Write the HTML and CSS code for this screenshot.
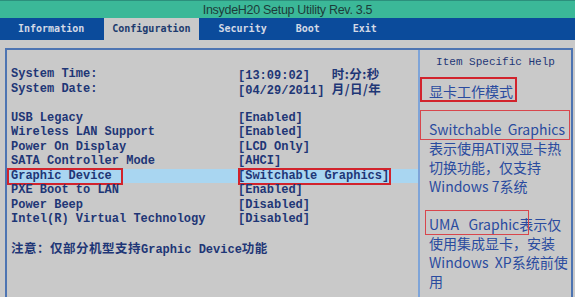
FILE: index.html
```html
<!DOCTYPE html>
<html lang="zh-CN">
<head>
  <meta charset="UTF-8" />
  <title>InsydeH20 Setup Utility</title>
  <link rel="stylesheet" href="styles.css">
</head>
<body>
  <div class="title">InsydeH20 Setup Utility Rev. 3.5</div>

  <nav class="tabs">
    <span class="tab">Information</span>
    <span class="tab active">Configuration</span>
    <span class="tab">Security</span>
    <span class="tab">Boot</span>
    <span class="tab">Exit</span>
  </nav>

  <main class="page">
    <div class="frame">
      <section class="settings">
        <div class="row"><span>System Time:</span><span>[13:09:02]&nbsp;&nbsp; <b class="cn">时:分:秒</b></span></div>
        <div class="row"><span>System Date:</span><span>[04/29/2011] <b class="cn">月/日/年</b></span></div>
        <div class="row gap"></div>
        <div class="row"><span>USB Legacy</span><span>[Enabled]</span></div>
        <div class="row"><span>Wireless LAN Support</span><span>[Enabled]</span></div>
        <div class="row"><span>Power On Display</span><span>[LCD Only]</span></div>
        <div class="row"><span>SATA Controller Mode</span><span>[AHCI]</span></div>
        <div class="row selected">
          <span>Graphic Device</span><span>[Switchable Graphics]</span>
          <i class="mark mark-label"></i>
          <i class="mark mark-value"></i>
        </div>
        <div class="row"><span>PXE Boot to LAN</span><span>[Enabled]</span></div>
        <div class="row"><span>Power Beep</span><span>[Disabled]</span></div>
        <div class="row"><span>Intel(R) Virtual Technology</span><span>[Disabled]</span></div>
        <div class="row gap"></div>
        <div class="note"><b class="cn">注意：仅部分机型支持</b>Graphic Device<b class="cn">功能</b></div>
      </section>

      <aside class="help">
        <div class="help-title">Item Specific Help</div>
        <div class="help-text">
          <div>显卡工作模式</div>
          <div>&nbsp;</div>
          <div class="pre">Switchable  Graphics</div>
          <div>表示使用ATI双显卡热</div>
          <div>切换功能，仅支持</div>
          <div>Windows 7系统</div>
          <div>&nbsp;</div>
          <div class="pre">UMA   Graphic表示仅</div>
          <div>使用集成显卡，安装</div>
          <div class="pre">Windows  XP系统前使</div>
          <div>用</div>
        </div>
        <i class="mark help-mark-1"></i>
        <i class="mark thin help-mark-2"></i>
        <i class="mark thin help-mark-3"></i>
      </aside>
    </div>
  </main>
</body>
</html>
```

FILE: styles.css
```css
body { margin: 0; width: 575px; height: 297px; overflow: hidden; background: #c9c9c9; font-family: "Liberation Mono", "Noto Sans CJK SC", monospace; }

.title { height: 18px; line-height: 19px; background: #3bb898; border-top: 1px solid #2c8f7c; box-sizing: border-box; text-align: center; color: #1d3c3a; font-family: "Liberation Sans", Arial, sans-serif; font-size: 12.5px; letter-spacing: -0.3px; }

.tabs { height: 22px; background: #0b4b9b; display: flex; align-items: stretch; gap: 12px; padding-left: 10px; }
.tab { padding: 0 8px; line-height: 22px; font-family: "DejaVu Sans Mono", monospace; font-weight: bold; font-size: 10px; color: #d3d9e6; }
.tab.active { background: #c9c9c9; color: #1c3a6e; }
.tab:nth-child(4) { margin-left: 1px; }
.tab:nth-child(5) { margin-left: 5px; }

.page { padding: 8px 2px 0 5px; }
.frame { display: flex; height: 260px; border: 2px solid #4d74b2; border-bottom: none; }

.settings { position: relative; width: 411px; border-right: 2px solid #7ea4d8; padding-top: 17px; color: #1e3676; font-size: 12px; font-weight: bold; }
.row { position: relative; display: grid; grid-template-columns: 227px 1fr; height: 14.5px; line-height: 14.5px; padding-left: 4px; }
.row.selected { background: #a9d6f1; }
.note { padding-left: 4px; line-height: 14.5px; }
.cn { font-family: "Noto Sans CJK SC", sans-serif; font-size: 12.5px; line-height: 14px; font-weight: bold; letter-spacing: 0.5px; }

.mark { position: absolute; border: 2px solid #d2232c; box-sizing: border-box; }
.mark.thin { border-width: 1px; border-color: #d8464c; }
.mark-label { left: 0; top: -1px; width: 116px; height: 17px; }
.mark-value { left: 231px; top: -1px; width: 153px; height: 17px; }

.help { position: relative; flex: 1; }
.help-title { text-align: center; padding-top: 5px; line-height: 14px; font-size: 11px; color: #1e3676; }
.help-text { margin-top: 12.5px; padding-left: 9px; color: #2a4b9f; font-family: "Noto Sans CJK SC", "Noto Sans", sans-serif; font-size: 14px; line-height: 19px; }
.pre { white-space: pre; }
.help-mark-1 { left: 0; top: 27px; width: 97px; height: 25px; }
.help-mark-2 { left: 0; top: 60px; width: 150px; height: 30px; }
.help-mark-3 { left: 5px; top: 160px; width: 104px; height: 25px; }
```
